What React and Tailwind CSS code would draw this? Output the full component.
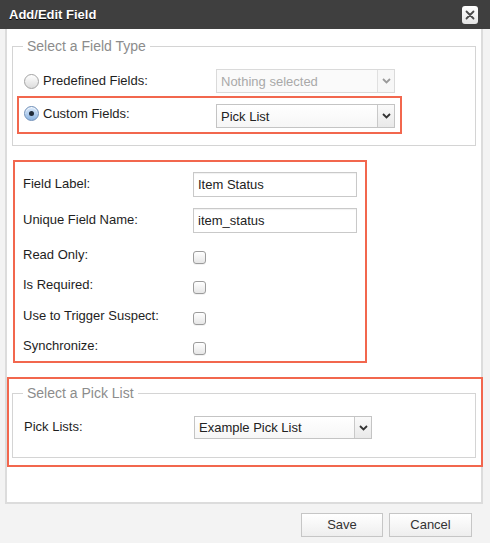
import React from "react";

function Chevron({ muted }) {
  return (
    <svg width="9" height="6" viewBox="0 0 9 6" className={muted ? "text-[#9a9a9a]" : "text-[#333]"}>
      <path d="M1 1 L4.5 4.5 L8 1" fill="none" stroke="currentColor" strokeWidth="1.8" />
    </svg>
  );
}

function Select({ value, widthClass, heightClass = "h-[24px]", disabled }) {
  return (
    <div
      className={`flex ${widthClass} ${heightClass} border ${
        disabled ? "border-[#dadada] bg-[#fafafa] text-[#a9a9a9]" : "border-[#c4c4c4] bg-gradient-to-b from-white to-[#f6f6f6] text-[#222]"
      }`}
    >
      <span className="flex flex-1 items-center pl-[4px] text-[13px] leading-none">{value}</span>
      <span
        className={`flex w-[17px] items-center justify-center border-l ${
          disabled ? "border-[#e0e0e0] bg-[#f7f7f7]" : "border-[#c9c9c9] bg-gradient-to-b from-[#fafafa] to-[#e9e9e9]"
        }`}
      >
        <Chevron muted={disabled} />
      </span>
    </div>
  );
}

function Radio({ checked }) {
  return checked ? (
    <span className="flex h-[15px] w-[15px] items-center justify-center rounded-full border border-[#6f8fb8] bg-gradient-to-b from-[#dceafa] to-[#8db5e2] shadow-[inset_0_1px_1px_rgba(255,255,255,0.8)]">
      <span className="h-[5px] w-[5px] rounded-full bg-[#1f2a38]" />
    </span>
  ) : (
    <span className="h-[15px] w-[15px] rounded-full border border-[#a3a3a3] bg-gradient-to-b from-white to-[#dcdcdc]" />
  );
}

function Checkbox() {
  return (
    <input
      type="checkbox"
      className="h-[13px] w-[13px] appearance-none rounded-[3px] border border-[#9c9c9c] bg-gradient-to-b from-white to-[#e6e6e6] shadow-[0_1px_0_rgba(0,0,0,0.05)]"
    />
  );
}

function TextInput({ value }) {
  return (
    <input
      type="text"
      readOnly
      defaultValue={value}
      className="h-[25px] w-[164px] border border-[#c9c9c9] bg-white px-[4px] text-[13px] text-[#222] outline-none shadow-[inset_0_1px_1px_rgba(0,0,0,0.06)]"
    />
  );
}

function Legend({ children }) {
  return <legend className="ml-[10px] px-[4px] text-[14px] leading-[18px] text-[#8c8c8c]">{children}</legend>;
}

function CheckRow({ label, rowClass }) {
  return (
    <div className={`flex items-center ${rowClass}`}>
      <span className="w-[170px] -translate-y-[1px]">{label}</span>
      <span className="mt-[2px] flex">
        <Checkbox />
      </span>
    </div>
  );
}

export default function App() {
  return (
    <div className="h-[549px] w-[490px] bg-white font-['Liberation_Sans',Arial,sans-serif] text-[13px] text-[#1e1e1e]">
      <div className="flex h-[29px] items-center justify-between bg-[#3f3f3f] pl-[9px] pr-[12px]">
        <span className="text-[13px] font-bold text-white [text-shadow:0_1px_0_#000]">Add/Edit Field</span>
        <button className="mt-[1px] flex h-[18px] w-[16px] items-center justify-center rounded-[3px] bg-gradient-to-b from-white to-[#e4e4e4]">
          <svg width="10" height="10" viewBox="0 0 10 10">
            <path d="M1.5 1.5 L8.5 8.5 M8.5 1.5 L1.5 8.5" stroke="#4a4a4a" strokeWidth="1.8" strokeLinecap="round" />
          </svg>
        </button>
      </div>

      <div className="bg-[#f3f3f3] pl-[5px] pr-[7px]">
        <div className="flex h-[475px] flex-col border-2 border-t-0 border-[#dcdcdc] bg-white">
          {/* field type */}
          <fieldset className="ml-[5px] mt-[8px] w-[464px] border border-[#d4d4d4] pb-[11px]">
            <Legend>Select a Field Type</Legend>
            <div className="mt-[14px] flex h-[24px] items-center pl-[11px]">
              <div className="flex w-[192px] items-center gap-[4px]">
                <Radio />
                <span>Predefined Fields:</span>
              </div>
              <Select value="Nothing selected" widthClass="w-[179px]" disabled />
            </div>
            <div className="ml-[4px] mt-[3px] flex h-[38px] w-[385px] items-start border-2 border-[#f2674e] pl-[5px] pt-[6px]">
              <div className="flex h-[19px] w-[192px] items-center gap-[4px]">
                <Radio checked />
                <span>Custom Fields:</span>
              </div>
              <Select value="Pick List" widthClass="w-[179px]" />
            </div>
          </fieldset>

          {/* field details */}
          <div className="ml-[6px] mt-[14px] h-[203px] w-[354px] border-2 border-[#f2674e] pl-[8px] pt-[10px]">
            <div className="flex h-[24px] items-center">
              <span className="w-[170px]">Field Label:</span>
              <TextInput value="Item Status" />
            </div>
            <div className="mt-[12px] flex h-[24px] items-center">
              <span className="w-[170px]">Unique Field Name:</span>
              <TextInput value="item_status" />
            </div>
            <CheckRow label="Read Only:" rowClass="mt-[10px] h-[28px]" />
            <CheckRow label="Is Required:" rowClass="mt-[2px] h-[28px]" />
            <CheckRow label="Use to Trigger Suspect:" rowClass="mt-[3px] h-[28px]" />
            <CheckRow label="Synchronize:" rowClass="mt-[3px] h-[26px]" />
          </div>

          {/* pick list */}
          <div className="mt-[14px] h-[90px] w-[476px] border-2 border-[#f2674e] pl-[3px] pt-[5px]">
            <fieldset className="w-[464px] border border-[#d4d4d4] pb-[18px]">
              <Legend>Select a Pick List</Legend>
              <div className="mt-[14px] flex h-[23px] items-center pl-[11px]">
                <span className="w-[170px] -translate-y-[1px]">Pick Lists:</span>
                <Select value="Example Pick List" widthClass="w-[178px]" heightClass="h-[23px]" />
              </div>
            </fieldset>
          </div>
        </div>

        <div className="flex h-[39px] justify-end gap-[6px] pr-[11px] pt-[9px]">
          <button className="h-[24px] w-[82px] border border-[#c6c6c6] bg-gradient-to-b from-white to-[#eeeeee] text-[13px] text-[#333]">
            Save
          </button>
          <button className="h-[24px] w-[83px] border border-[#c6c6c6] bg-gradient-to-b from-white to-[#eeeeee] text-[13px] text-[#333]">
            Cancel
          </button>
        </div>
      </div>
    </div>
  );
}
